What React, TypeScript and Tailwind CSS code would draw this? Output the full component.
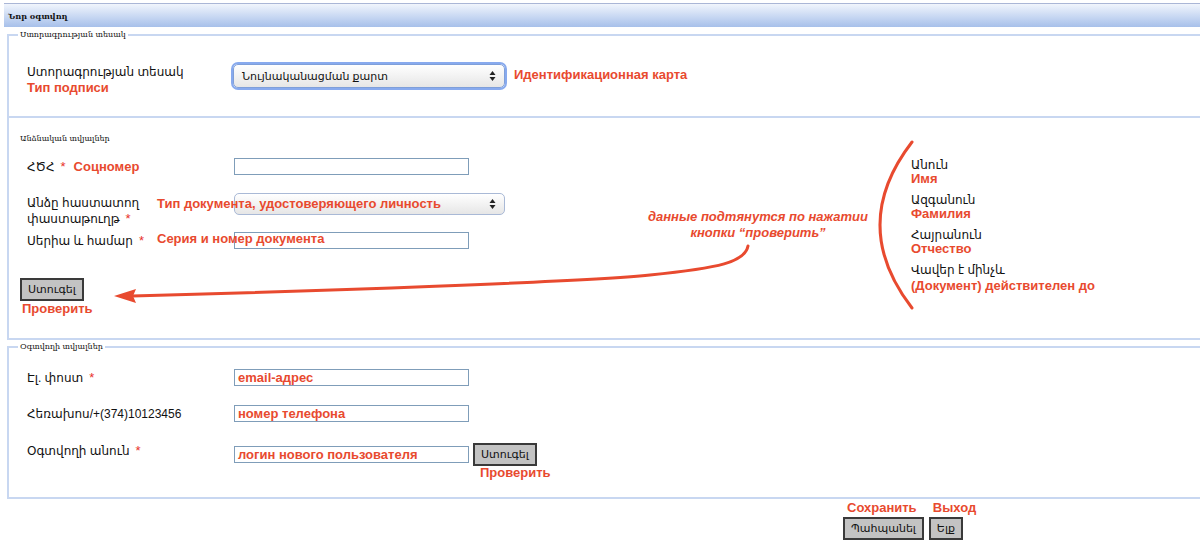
import type { ReactNode } from 'react'

// шрифты: латиница/кириллица — Liberation Sans, армянский подхватывает DejaVu
const sans = "font-['Liberation_Sans','DejaVu_Sans',sans-serif]"

function Req() {
  return <span className="ml-[6px] text-[13px] text-[#e8312a]">*</span>
}

function SelectArrows() {
  return (
    <svg width="7" height="11" viewBox="0 0 7 11" className="absolute right-[8px] top-1/2 -translate-y-1/2">
      <path d="M3.5 0.5 L6.5 4.5 H0.5 Z" fill="#222" />
      <path d="M3.5 10.5 L6.5 6.5 H0.5 Z" fill="#222" />
    </svg>
  )
}

function FakeSelect({ children, focused }: { children?: ReactNode; focused?: boolean }) {
  return (
    <div
      className={`relative flex h-[24px] w-[272px] items-center rounded-[5px] bg-linear-to-b from-white to-[#e6e6e6] pl-[8px] text-[11px] text-[#111] ${
        focused
          ? 'border border-[#7f9fd9] shadow-[0_0_0_2px_#88aaee]'
          : 'border border-[#a9b9d6]'
      }`}
    >
      {children}
      <SelectArrows />
    </div>
  )
}

function TextBox({ value }: { value?: string }) {
  return (
    <div className="flex h-[17px] w-[235px] items-center border border-[#7f9db9] bg-white px-[3px] text-[13px] leading-none font-bold text-[#e84a2f]">
      {value}
    </div>
  )
}

function GrayButton({ children }: { children: ReactNode }) {
  return (
    <button className="h-[23px] border-2 border-[#3a3a3a] bg-[#c3c3c3] px-[6px] text-[11px] leading-none text-[#111]">
      {children}
    </button>
  )
}

export default function App() {
  return (
    <div className={`relative h-[549px] w-[1200px] overflow-hidden bg-white ${sans} text-[12px] text-[#111]`}>
      {/* шапка окна */}
      <div className="mt-[3px] ml-[4px] flex h-[24px] items-center border-t border-[#aab6d6] bg-linear-to-b from-[#f1f5fc] to-[#a7c0ea] pl-[4px]">
        <span className="font-['DejaVu_Serif',serif] text-[8px] font-bold">Նոր օգտվող</span>
      </div>

      {/* тип подписи */}
      <fieldset className="mt-[2px] ml-[7px] border-y-2 border-l-2 border-[#c8d7f1] pt-[23px] pb-[20px] pl-[18px]">
        <legend className="-ml-[9px] px-[2px] font-['DejaVu_Serif',serif] text-[8px] leading-[12px]">
          Ստորագրության տեսակ
        </legend>
        <div className="flex items-start">
          <div className="w-[206px] leading-[16px]">
            <div>Ստորագրության տեսակ</div>
            <div className="text-[13px] font-bold text-[#e84a2f]">Тип подписи</div>
          </div>
          <FakeSelect focused>Նույնականացման քարտ</FakeSelect>
          <div className="mt-[3px] ml-[9px] text-[13px] leading-[16px] font-bold text-[#e84a2f]">
            Идентификационная карта
          </div>
        </div>
      </fieldset>

      {/* личные данные */}
      <div className="ml-[7px] flex border-b-2 border-l-2 border-[#c8d7f1] pt-[15px] pb-[21px] pl-[11px]">
        <div className="w-[891px]">
          <div className="font-['DejaVu_Serif',serif] text-[8px] leading-[12px]">Անձնական տվյալներ</div>

          <div className="mt-[13px] flex items-center pl-[7px]">
            <div className="w-[207px] leading-[16px]">
              ՀԾՀ<Req />
              <span className="ml-[8px] text-[13px] font-bold text-[#e84a2f]">Соцномер</span>
            </div>
            <TextBox />
          </div>

          <div className="relative mt-[18px] flex items-start pl-[7px]">
            <div className="w-[207px] pt-[2px] leading-[16px]">
              <div>Անձը հաստատող</div>
              <div>
                փաստաթուղթ<Req />
              </div>
            </div>
            <div className="h-[22px] [&>div]:h-[22px] [&>div]:w-[271px]">
              <FakeSelect />
            </div>
            <span className="absolute top-[3px] left-[137px] text-[13px] leading-[16px] font-bold text-[#e84a2f]">
              Тип документа, удостоверяющего личность
            </span>
          </div>

          <div className="relative mt-[5px] flex items-center pl-[7px]">
            <div className="w-[207px] leading-[16px]">
              Սերիա և համար<Req />
            </div>
            <TextBox />
            <span className="absolute top-[-1px] left-[137px] text-[13px] leading-[16px] font-bold text-[#e84a2f]">
              Серия и номер документа
            </span>
          </div>

          <div className="mt-[29px]">
            <GrayButton>Ստուգել</GrayButton>
            <div className="ml-[2px] text-[13px] leading-[16px] font-bold text-[#e84a2f]">Проверить</div>
          </div>
        </div>

        {/* поля, которые подтягиваются после проверки */}
        <div className="pt-[26px] leading-[13px]">
          <div>Անուն</div>
          <div className="text-[13px] font-bold text-[#e84a2f]">Имя</div>
          <div className="mt-[9px]">Ազգանուն</div>
          <div className="text-[13px] font-bold text-[#e84a2f]">Фамилия</div>
          <div className="mt-[9px]">Հայրանուն</div>
          <div className="text-[13px] font-bold text-[#e84a2f]">Отчество</div>
          <div className="mt-[9px]">Վավեր է մինչև</div>
          <div className="mt-[2px] text-[13px] font-bold text-[#e84a2f]">(Документ) действителен до</div>
        </div>
      </div>

      {/* данные пользователя */}
      <fieldset className="mt-[1px] ml-[7px] border-y-2 border-l-2 border-[#c8d7f1] pt-[16px] pb-[17px] pl-[18px]">
        <legend className="-ml-[9px] px-[2px] font-['DejaVu_Serif',serif] text-[8px] leading-[12px]">
          Օգտվողի տվյալներ
        </legend>
        <div className="flex items-center">
          <div className="w-[207px] leading-[16px]">
            Էլ. փոստ<Req />
          </div>
          <TextBox value="email-адрес" />
        </div>
        <div className="mt-[19px] flex items-center">
          <div className="w-[207px] leading-[16px]">Հեռախոս/+(374)10123456</div>
          <TextBox value="номер телефона" />
        </div>
        <div className="mt-[21px] flex items-start">
          <div className="w-[207px] leading-[16px]">
            Օգտվողի անուն<Req />
          </div>
          <div className="mt-[3px]">
            <TextBox value="логин нового пользователя" />
          </div>
          <div className="ml-[4px]">
            <GrayButton>Ստուգել</GrayButton>
            <div className="ml-[7px] text-[13px] leading-[14px] font-bold text-[#e84a2f]">Проверить</div>
          </div>
        </div>
      </fieldset>

      {/* сохранить / выход */}
      <div className="mt-[2px] ml-[843px] flex gap-[5px]">
        <div>
          <div className="ml-[4px] text-[13px] leading-[14px] font-bold text-[#e84a2f]">Сохранить</div>
          <div className="mt-[2px]">
            <GrayButton>Պահպանել</GrayButton>
          </div>
        </div>
        <div>
          <div className="ml-[4px] text-[13px] leading-[14px] font-bold text-[#e84a2f]">Выход</div>
          <div className="mt-[2px]">
            <GrayButton>Ելք</GrayButton>
          </div>
        </div>
      </div>

      {/* пометки поверх формы */}
      <div className="pointer-events-none absolute top-[209px] left-[640px] w-[236px] text-center text-[13px] leading-[16px] font-bold text-[#e84a2f] italic">
        <div>данные подтянутся по нажатии</div>
        <div>кнопки “проверить”</div>
      </div>
      <svg className="pointer-events-none absolute top-0 left-0" width="1200" height="549" viewBox="0 0 1200 549">
        <path
          d="M748 246 C745 262 720 268 650 275 S 320 291 132 296"
          fill="none"
          stroke="#e84a2f"
          strokeWidth="3"
          strokeLinecap="round"
        />
        <path d="M114 296 L136 289 L133 296 L136 303 Z" fill="#e84a2f" />
        <path d="M912 142 Q848 225 912 308" fill="none" stroke="#e84a2f" strokeWidth="3" strokeLinecap="round" />
      </svg>
    </div>
  )
}
